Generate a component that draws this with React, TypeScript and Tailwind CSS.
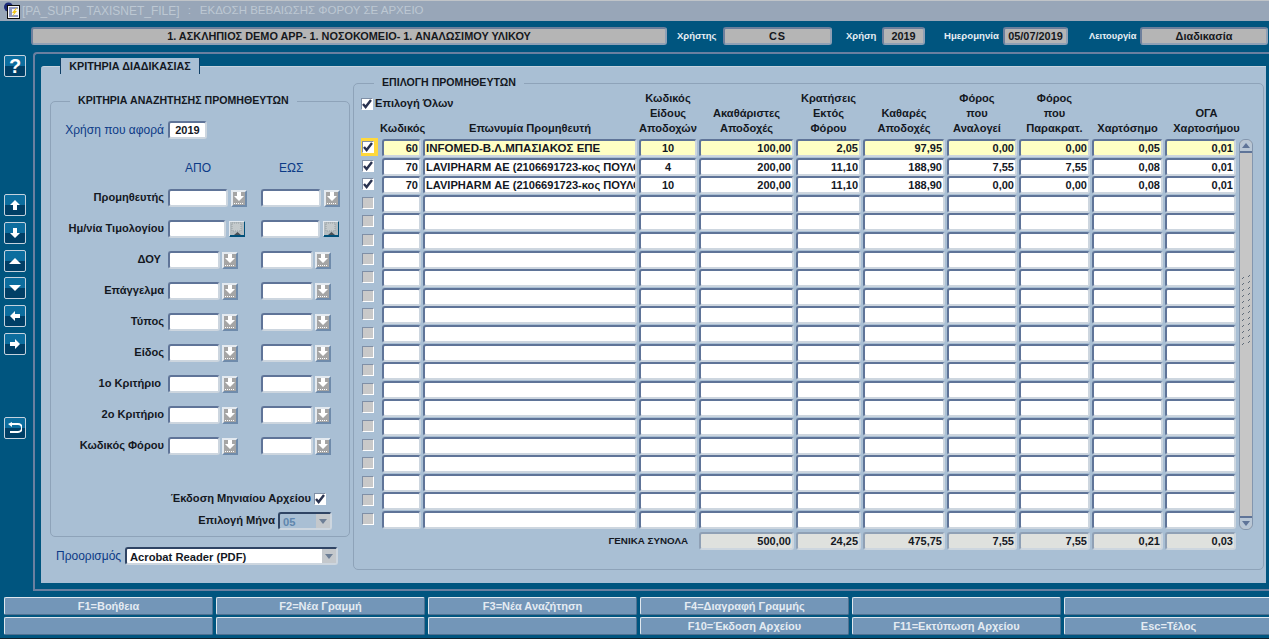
import type { ReactNode } from "react";

const inset =
  "border-2 border-t-[#5f7498] border-l-[#5f7498] border-r-[#cdd6df] border-b-[#cdd6df] rounded-[3px]";
const label = "text-[11.1px] font-bold leading-none whitespace-nowrap text-[#14181f]";
const topLabel = "font-bold leading-[18px] text-[#e6edf3] whitespace-nowrap";

const GRID_COLS =
  "grid grid-cols-[19px_39px_214px_58px_95px_65px_82px_70px_71px_71px_71px] gap-x-[2px]";

interface RowData {
  cb: boolean;
  code?: string;
  name?: string;
  kind?: string;
  nums?: string[];
}

const LAVI = "LAVIPHARM ΑΕ (2106691723-κος ΠΟΥΛΟΣ)";

const DATA: RowData[] = [
  { cb: true, code: "60", name: "INFOMED-Β.Λ.ΜΠΑΣΙΑΚΟΣ ΕΠΕ", kind: "10", nums: ["100,00", "2,05", "97,95", "0,00", "0,00", "0,05", "0,01"] },
  { cb: true, code: "70", name: LAVI, kind: "4", nums: ["200,00", "11,10", "188,90", "7,55", "7,55", "0,08", "0,01"] },
  { cb: true, code: "70", name: LAVI, kind: "10", nums: ["200,00", "11,10", "188,90", "0,00", "0,00", "0,08", "0,01"] },
  ...Array.from({ length: 18 }, () => ({ cb: false })),
];

const TOTALS = ["500,00", "24,25", "475,75", "7,55", "7,55", "0,21", "0,03"];

const HEADERS: { lines: string[]; shift: string }[] = [
  { lines: ["Κωδικός", "Είδους", "Αποδοχών"], shift: "" },
  { lines: ["Ακαθάριστες", "Αποδοχές"], shift: "" },
  { lines: ["Κρατήσεις", "Εκτός", "Φόρου"], shift: "" },
  { lines: ["Καθαρές", "Αποδοχές"], shift: "" },
  { lines: ["Φόρος", "που", "Αναλογεί"], shift: "-translate-x-[5px]" },
  { lines: ["Φόρος", "που", "Παρακρατ."], shift: "" },
  { lines: ["Χαρτόσημο"], shift: "" },
  { lines: ["ΟΓΑ", "Χαρτοσήμου"], shift: "translate-x-[6px]" },
];

const CRITERIA = [
  { text: "Προμηθευτής", w1: "w-[60px]", w2: "w-[60px]", gap: "ml-[3px]", pr: "pr-0", date: false },
  { text: "Ημ/νία Τιμολογίου", w1: "w-[58px]", w2: "w-[59px]", gap: "ml-[3px]", pr: "pr-0", date: true },
  { text: "ΔΟΥ", w1: "w-[52px]", w2: "w-[52px]", gap: "ml-[2px]", pr: "pr-[3px]", date: false },
  { text: "Επάγγελμα", w1: "w-[52px]", w2: "w-[52px]", gap: "ml-[2px]", pr: "pr-0", date: false },
  { text: "Τύπος", w1: "w-[52px]", w2: "w-[52px]", gap: "ml-[2px]", pr: "pr-0", date: false },
  { text: "Είδος", w1: "w-[52px]", w2: "w-[52px]", gap: "ml-[2px]", pr: "pr-0", date: false },
  { text: "1ο Κριτήριο", w1: "w-[52px]", w2: "w-[52px]", gap: "ml-[2px]", pr: "pr-[3px]", date: false },
  { text: "2ο Κριτήριο", w1: "w-[52px]", w2: "w-[52px]", gap: "ml-[2px]", pr: "pr-0", date: false },
  { text: "Κωδικός Φόρου", w1: "w-[52px]", w2: "w-[52px]", gap: "ml-[2px]", pr: "pr-0", date: false },
];

const FKEYS = [
  "F1=Βοήθεια", "F2=Νέα Γραμμή", "F3=Νέα Αναζήτηση", "F4=Διαγραφή Γραμμής", "", "",
  "", "", "", "F10=Έκδοση Αρχείου", "F11=Εκτύπωση Αρχείου", "Esc=Τέλος",
];

function TitleIcon() {
  return (
    <svg width="18" height="18" viewBox="0 0 18 18" className="shrink-0">
      <circle cx="5.5" cy="5" r="4.5" fill="#1c2a78" />
      <rect x="4.5" y="3.5" width="12" height="13" fill="#f6f6f6" stroke="#0c0c0c" />
      <path d="M6 6h9M6 8h3M6 10h3M6 12h3M6 14h9" stroke="#2a3a8c" />
      <path d="M13 6l-4 5h2l-2 4 5-6h-2l2-3z" fill="#f2c414" />
    </svg>
  );
}

function HeaderField({ children, w }: { children: ReactNode; w: string }) {
  return (
    <div className={`${w} h-[18px] shrink-0 border-2 border-t-[#6d7f9c] border-l-[#6d7f9c] border-r-[#8fa0b5] border-b-[#8fa0b5] rounded-[3px] bg-[#b5b5b5] flex items-center justify-center text-[10.9px] font-bold text-[#15181c] whitespace-nowrap`}>
      {children}
    </div>
  );
}

function ToolButton({ children, mt }: { children: ReactNode; mt: string }) {
  return (
    <div className={`${mt} w-[22px] h-[22px] ml-[4px] border border-[#c4d2de] rounded-[2px] bg-gradient-to-b from-[#0c6d9e] from-50% to-[#003f66] to-50% flex items-center justify-center`}>
      {children}
    </div>
  );
}

function Arrow({ points }: { points: string }) {
  return (
    <svg width="12" height="12" viewBox="0 0 12 12">
      <polygon points={points} fill="#fff" />
    </svg>
  );
}

function LovButton({ gap }: { gap: string }) {
  return (
    <div className={`${gap} w-[16px] h-[17px] shrink-0 border-2 border-t-[#e4eaf0] border-l-[#e4eaf0] border-r-[#6f8bab] border-b-[#6f8bab] bg-[#a5a5a5] flex items-center justify-center`}>
      <svg width="10" height="12" viewBox="0 0 10 12">
        <polygon points="3,0 7,0 7,4 10,4 5,9 0,4 3,4" fill="#fff" />
        <path d="M0 11.5h10" stroke="#fff" strokeDasharray="1 1" />
      </svg>
    </div>
  );
}

function DateButton() {
  return (
    <div className="ml-[3px] w-[16px] h-[16px] shrink-0 border border-t-[#e4eaf0] border-l-[#e4eaf0] border-r-[#004f78] border-b-[#004f78] bg-[#b4bcc0] flex items-center justify-center">
      <svg width="14" height="14" viewBox="0 0 14 14">
        <rect x="2" y="1" width="9" height="8" fill="#c4cacc" stroke="#97a0a4" strokeDasharray="1 1" />
        <polygon points="4,13 7.5,10 11,13" fill="#4a5056" />
        <path d="M0 13.5h14" stroke="#00507a" />
      </svg>
    </div>
  );
}

function Check({ on }: { on: boolean }) {
  return (
    <div className={`w-[12px] h-[12px] shrink-0 border border-t-[#7f8fa6] border-l-[#7f8fa6] border-r-white border-b-white flex items-center justify-center ${on ? "bg-white" : "bg-[#c9c9c9]"}`}>
      {on && (
        <svg width="10" height="10" viewBox="0 0 10 10">
          <path d="M1 5l2.6 3L9 1" fill="none" stroke="#2a3350" strokeWidth="2.4" />
        </svg>
      )}
    </div>
  );
}

function Legend({ children, pos }: { children: ReactNode; pos: string }) {
  return (
    <div className={`absolute -top-[7px] ${pos} px-[8px] bg-[#a9bfd4] text-[10.6px] font-bold leading-none whitespace-nowrap text-[#14181f]`}>{children}</div>
  );
}

function SelectBox({ w, value, disabled }: { w: string; value: string; disabled?: boolean }) {
  return (
    <div className={`${w} h-[18px] shrink-0 border-2 border-t-[#2f4464] border-l-[#2f4464] border-r-[#cdd6df] border-b-[#cdd6df] rounded-[3px] flex items-stretch ${disabled ? "bg-[#a9bfd4]" : "bg-white"}`}>
      <span className={`flex-1 pl-[3px] text-[11.2px] font-bold leading-[17px] ${disabled ? "text-[#5f86ad]" : "text-[#14181f]"}`}>{value}</span>
      <span className="w-[14px] bg-[#c4c8cc] flex items-center justify-center">
        <svg width="8" height="5" viewBox="0 0 8 5"><polygon points="0,0 8,0 4,5" fill="#6e7f96" /></svg>
      </span>
    </div>
  );
}

function Scrollbar() {
  return (
    <div className="ml-[3px] w-[14px] h-[391px] flex flex-col bg-[#c6c6c6] border border-[#8396ae] rounded-t-[6px] rounded-b-[6px]">
      <div className="h-[13px] bg-[#b9c7d6] border-b-2 border-[#5f7498] rounded-t-[6px] flex items-center justify-center">
        <svg width="8" height="5" viewBox="0 0 8 5"><polygon points="0,5 8,5 4,0" fill="#5f7498" /></svg>
      </div>
      <div className="flex-1 pt-[122px]">
        <svg width="12" height="70" viewBox="0 0 12 70">
          {Array.from({ length: 12 }, (_, i) => (
            <g key={i}>
              <path d={`M2 ${i * 6 + 4}l2 -2`} stroke="#5f6b78" />
              <path d={`M8 ${i * 6 + 2}l2 -2`} stroke="#5f6b78" />
            </g>
          ))}
        </svg>
      </div>
      <div className="h-[13px] bg-[#b9c7d6] border-t-2 border-[#5f7498] rounded-b-[6px] flex items-center justify-center">
        <svg width="8" height="5" viewBox="0 0 8 5"><polygon points="0,0 8,0 4,5" fill="#5f7498" /></svg>
      </div>
    </div>
  );
}

function CriteriaPanel() {
  return (
    <div className="w-[300px] shrink-0 mt-[34px]">
      <div className="relative h-[436px] border border-[#8ea3b9] rounded-[5px] pt-[19px]">
        <Legend pos="left-[19px]">ΚΡΙΤΗΡΙΑ ΑΝΑΖΗΤΗΣΗΣ ΠΡΟΜΗΘΕΥΤΩΝ</Legend>

        <div className="flex items-center h-[17px]">
          <span className="w-[113px] text-right text-[12px] leading-none text-[#0c3a86] whitespace-nowrap">Χρήση που αφορά</span>
          <div className={`ml-[4px] w-[39px] h-[18px] ${inset} bg-white text-center text-[11px] font-bold leading-[14px] text-[#14181f]`}>2019</div>
        </div>

        <div className="mt-[23px] h-[15px] flex text-[12px] leading-[15px] text-[#0c3a86]">
          <span className="ml-[134px] w-[94px]">ΑΠΟ</span>
          <span>ΕΩΣ</span>
        </div>

        <div className="mt-[13px] grid auto-rows-[31px]">
          {CRITERIA.map((c) => (
            <div key={c.text} className="flex h-[18px]">
              <div className={`w-[113px] text-right self-center ${label} ${c.pr}`}>{c.text}</div>
              <div className="ml-[4px] w-[93px] flex items-center">
                <div className={`${c.w1} h-[18px] ${inset} bg-white`} />
                {c.date ? <DateButton /> : <LovButton gap={c.gap} />}
              </div>
              <div className="flex items-center">
                <div className={`${c.w2} h-[18px] ${inset} bg-white`} />
                {c.date ? <DateButton /> : <LovButton gap={c.gap} />}
              </div>
            </div>
          ))}
        </div>

        <div className="mt-[24px] h-[14px] flex items-center justify-end pr-[23px] gap-[3px]">
          <span className={label}>Έκδοση Μηνιαίου Αρχείου</span>
          <Check on />
        </div>
        <div className="mt-[6px] flex items-center justify-end pr-[17px] gap-[3px]">
          <span className={label}>Επιλογή Μήνα</span>
          <SelectBox w="w-[54px]" value="05" disabled />
        </div>
      </div>

      <div className="mt-[10px] ml-[6px] flex items-center gap-[3px]">
        <span className="w-[66px] text-[12px] leading-none text-[#0c3a86] whitespace-nowrap">Προορισμός</span>
        <SelectBox w="w-[213px]" value="Acrobat Reader (PDF)" />
      </div>
    </div>
  );
}

function SupplierGrid() {
  return (
    <div className="relative w-[911px] h-[487px] mt-[16px] ml-[3px] border border-[#8ea3b9] rounded-[5px] pt-[7px] pl-[7px]">
      <Legend pos="left-[20px]">ΕΠΙΛΟΓΗ ΠΡΟΜΗΘΕΥΤΩΝ</Legend>

      <div className={`${GRID_COLS} h-[45px]`}>
        <div className="row-start-1 col-start-1 col-span-3 self-start mt-[7px] flex items-center gap-[2px]">
          <Check on />
          <span className={label}>Επιλογή Όλων</span>
        </div>
        <div className={`row-start-1 col-start-2 self-end -ml-[2px] h-[15px] leading-[15px]! ${label}`}>Κωδικός</div>
        <div className={`row-start-1 col-start-3 self-end text-center h-[15px] leading-[15px]! ${label}`}>Επωνυμία Προμηθευτή</div>
        {HEADERS.map((h, i) => (
          <div key={i} style={{ gridColumnStart: i + 4 }} className={`row-start-1 self-end flex flex-col items-center ${h.shift}`}>
            {h.lines.map((line) => (
              <span key={line} className={`h-[15px] leading-[15px]! ${label}`}>{line}</span>
            ))}
          </div>
        ))}
      </div>

      <div className="flex mt-[3px]">
        <div className={`${GRID_COLS} auto-rows-[18.6px]`}>
          {DATA.map((row, r) => {
            const bg = r === 0 ? "bg-[#ffffc4]" : "bg-white";
            const cell = `h-[18px] ${inset} ${bg} px-[1px] overflow-hidden whitespace-nowrap font-bold leading-[14px] text-[#14181f]`;
            return (
              <div key={r} className="contents">
                <div className={`w-[17px] h-[18px] -mt-[1px] flex items-center pl-[1px] ${r === 0 ? "bg-[#ffd83c]" : ""}`}>
                  <Check on={row.cb} />
                </div>
                <div className={`${cell} text-[11px] text-right`}>{row.code}</div>
                <div className={`${cell} ${r === 0 ? "text-[11.5px]" : "text-[11.1px]"}`}>{row.name}</div>
                <div className={`${cell} text-[11px] text-center`}>{row.kind}</div>
                {Array.from({ length: 7 }, (_, i) => (
                  <div key={i} className={`${cell} text-[11px] text-right`}>{row.nums?.[i]}</div>
                ))}
              </div>
            );
          })}
        </div>
        <Scrollbar />
      </div>

      <div className={`${GRID_COLS} mt-[2px]`}>
        <div className="col-span-4 text-right pr-[9px] self-center text-[9.8px] font-bold leading-none whitespace-nowrap text-[#14181f]">ΓΕΝΙΚΑ ΣΥΝΟΛΑ</div>
        {TOTALS.map((t, i) => (
          <div key={i} className="h-[18px] border-2 border-t-[#8fa0b5] border-l-[#8fa0b5] border-r-[#cdd6df] border-b-[#cdd6df] rounded-[3px] bg-[#dfe1de] px-[1px] text-right text-[11px] font-bold leading-[14px] text-[#14181f]">
            {t}
          </div>
        ))}
      </div>
    </div>
  );
}

export default function App() {
  return (
    <div className="w-[1269px] h-[639px] overflow-hidden bg-[#00557f] flex flex-col font-['Liberation_Sans',Arial,sans-serif] border-b border-[#10202c]">
      <div className="h-[21px] shrink-0 bg-[#98a6b8] border-t border-[#c0c4c8] flex items-center pl-[3px] gap-[1px] leading-none text-[#bdc8d3] whitespace-pre">
        <TitleIcon />
        <span className="text-[12px]">[PA_SUPP_TAXISNET_FILE]</span>
        <span className="ml-[7px] text-[11.5px]">:</span>
        <span className="ml-[8px] text-[11.5px]">ΕΚΔΟΣΗ ΒΕΒΑΙΩΣΗΣ ΦΟΡΟΥ ΣΕ ΑΡΧΕΙΟ</span>
      </div>

      <div className="h-[31px] shrink-0 pt-[6px] pl-[31px] flex items-start">
        <HeaderField w="w-[636px]">1. ΑΣΚΛΗΠΙΟΣ DEMO APP- 1. ΝΟΣΟΚΟΜΕΙΟ- 1. ΑΝΑΛΩΣΙΜΟΥ ΥΛΙΚΟΥ</HeaderField>
        <span className={`ml-[10px] w-[46px] text-[9.5px] ${topLabel}`}>Χρήστης</span>
        <HeaderField w="w-[109px]"><span className="tracking-[1px]">CS</span></HeaderField>
        <span className={`ml-[14px] w-[36px] text-[9.5px] ${topLabel}`}>Χρήση</span>
        <HeaderField w="w-[43px]">2019</HeaderField>
        <span className={`ml-[19px] w-[59px] text-[9.6px] ${topLabel}`}>Ημερομηνία</span>
        <HeaderField w="w-[65px]">05/07/2019</HeaderField>
        <span className={`ml-[21px] w-[51px] text-[9.3px] ${topLabel}`}>Λειτουργία</span>
        <HeaderField w="w-[128px]">Διαδικασία</HeaderField>
      </div>

      <div className="h-[539px] shrink-0 flex">
        <div className="w-[33px] shrink-0 flex flex-col">
          <ToolButton mt="mt-[3px]"><span className="text-[20px] font-bold leading-none text-white">?</span></ToolButton>
          <ToolButton mt="mt-[117px]"><Arrow points="6,1 11,6 8,6 8,11 4,11 4,6 1,6" /></ToolButton>
          <ToolButton mt="mt-[6px]"><Arrow points="6,11 11,6 8,6 8,1 4,1 4,6 1,6" /></ToolButton>
          <ToolButton mt="mt-[6px]"><Arrow points="6,3 12,9 0,9" /></ToolButton>
          <ToolButton mt="mt-[5px]"><Arrow points="6,9 12,3 0,3" /></ToolButton>
          <ToolButton mt="mt-[6px]"><Arrow points="1,6 6,1 6,4 11,4 11,8 6,8 6,11" /></ToolButton>
          <ToolButton mt="mt-[6px]"><Arrow points="11,6 6,1 6,4 1,4 1,8 6,8 6,11" /></ToolButton>
          <ToolButton mt="mt-[62px]">
            <svg width="14" height="12" viewBox="0 0 14 12">
              <path d="M3 2h7a3.5 3.5 0 0 1 0 8H2" fill="none" stroke="#fff" strokeWidth="2" />
              <polygon points="0,2 4,0 4,5" fill="#fff" />
            </svg>
          </ToolButton>
        </div>

        <div className="flex-1 border-t-2 border-l-2 border-b-2 border-[#6a80a0] rounded-tl-[4px] pl-[6px] pr-[3px] pt-[12px]">
          <div className="relative h-[517px] bg-[#a9bfd4] rounded-tl-[3px] flex pl-[9px] border-t border-[#c6d2dd]">
            <div className="absolute -top-[9px] left-[19px] w-[140px] h-[16px] bg-[#a9bfd4] border-x border-[#0f3f66] text-center text-[10.8px] font-bold leading-[16px] text-[#14181f]">
              ΚΡΙΤΗΡΙΑ ΔΙΑΔΙΚΑΣΙΑΣ
            </div>
            <CriteriaPanel />
            <SupplierGrid />
          </div>
        </div>
      </div>

      <div className="pl-[4px] pt-[6px] grid grid-cols-[repeat(6,209px)] auto-rows-[18px] gap-x-[3px] gap-y-[2px]">
        {FKEYS.map((key, i) => (
          <div key={i} className="border border-t-[#dfe7ee] border-l-[#dfe7ee] border-r-[#4f7191] border-b-[#4f7191] rounded-[2px] bg-[#7396b8] text-center text-[11px] font-bold leading-[16px] text-[#e4ebf2]">
            {key}
          </div>
        ))}
      </div>
    </div>
  );
}
